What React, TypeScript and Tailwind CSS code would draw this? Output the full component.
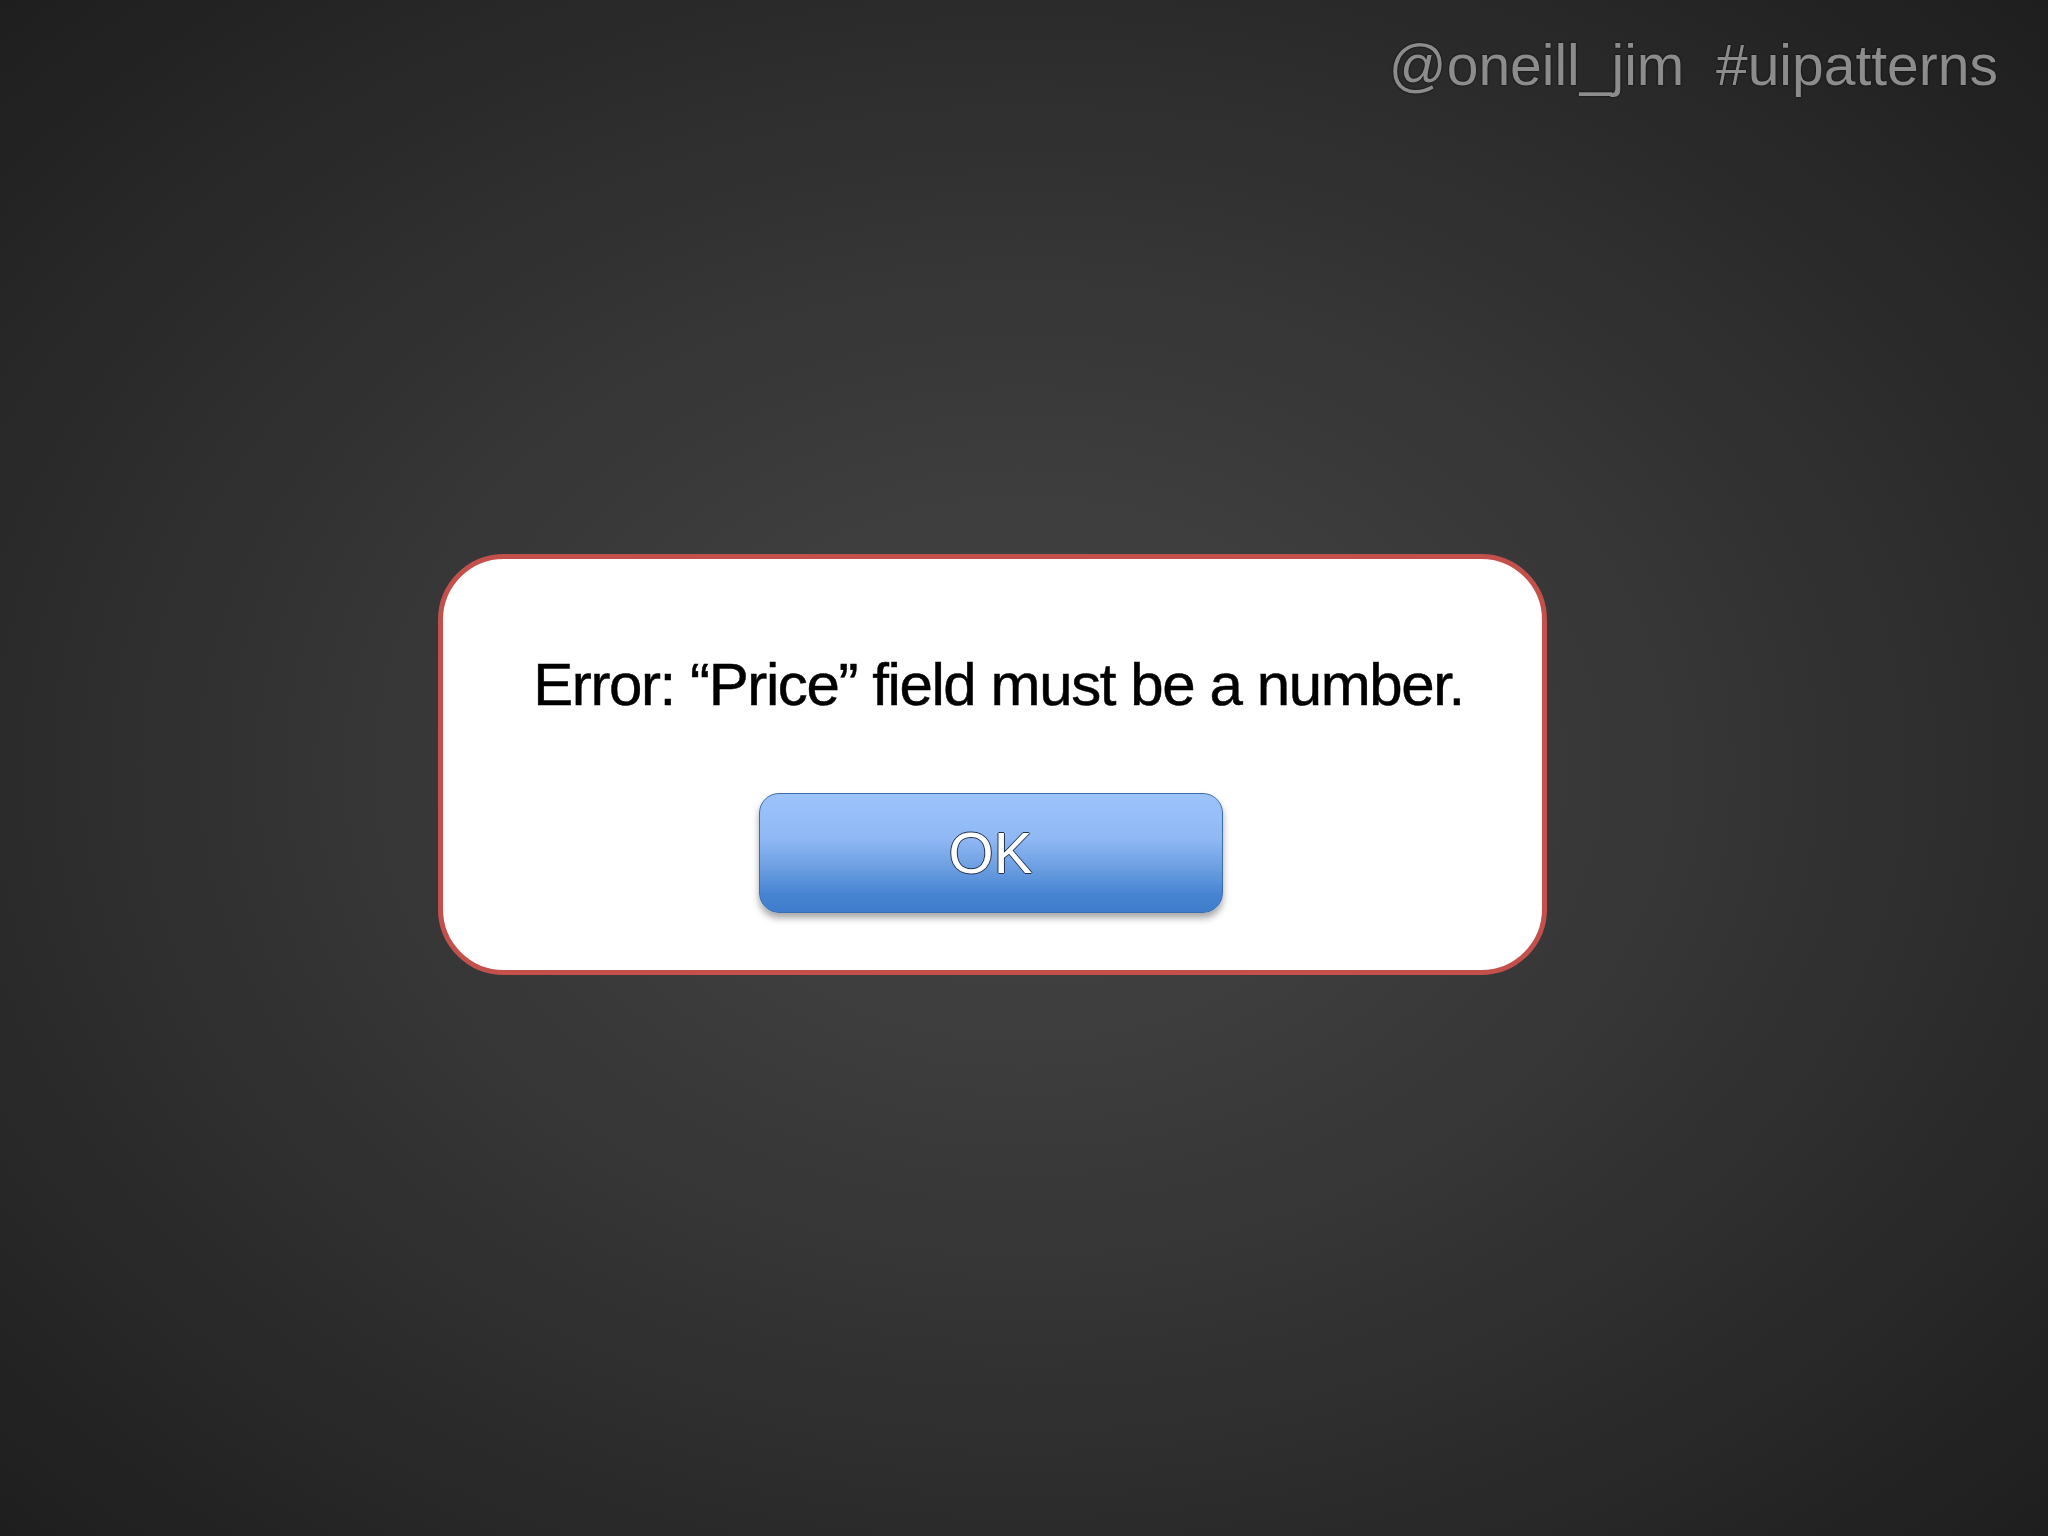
import React from "react";

export default function App() {
  return (
    <div className="w-full h-[1536px] overflow-hidden font-['Liberation_Sans',Arial,sans-serif] bg-[radial-gradient(ellipse_at_center,#464646_0%,#363636_45%,#292929_75%,#1e1e1e_100%)]">
      {/* handle / hashtag */}
      <div className="flex justify-end pr-[50px] pt-[37px]">
        <span className="text-[57px] leading-none text-[#8c8c8c] whitespace-pre [text-shadow:0_0_2px_#0e0e0e,0_0_1px_#0e0e0e]">
          {"@oneill_jim  #uipatterns"}
        </span>
      </div>

      {/* alert dialog */}
      <div className="ml-[438px] mt-[460px] w-[1109px] h-[421px] rounded-[66px] border-[5px] border-[#c4504c] bg-white flex flex-col items-center">
        <p className="pt-[96px] pl-[12px] text-[60px] leading-none text-black tracking-[-1.4px] whitespace-nowrap [-webkit-text-stroke:0.5px_#000]">
          Error: “Price” field must be a number.
        </p>
        <button
          type="button"
          className="mt-[78px] -ml-[4px] w-[464px] h-[120px] rounded-[20px] border-[1.5px] border-[#3a6cb2] bg-[linear-gradient(to_bottom,#9dc3fb_0%,#8fb8f4_38%,#6c9fe2_62%,#4784d2_85%,#3f7dcc_100%)] shadow-[0_5px_7px_rgba(0,0,0,0.35)] flex items-center justify-center"
        >
          <span className="text-[58px] leading-none text-white [text-shadow:1px_0_0_#22324d,-1px_0_0_#22324d,0_1px_0_#22324d,0_-1px_0_#22324d]">
            OK
          </span>
        </button>
      </div>
    </div>
  );
}
